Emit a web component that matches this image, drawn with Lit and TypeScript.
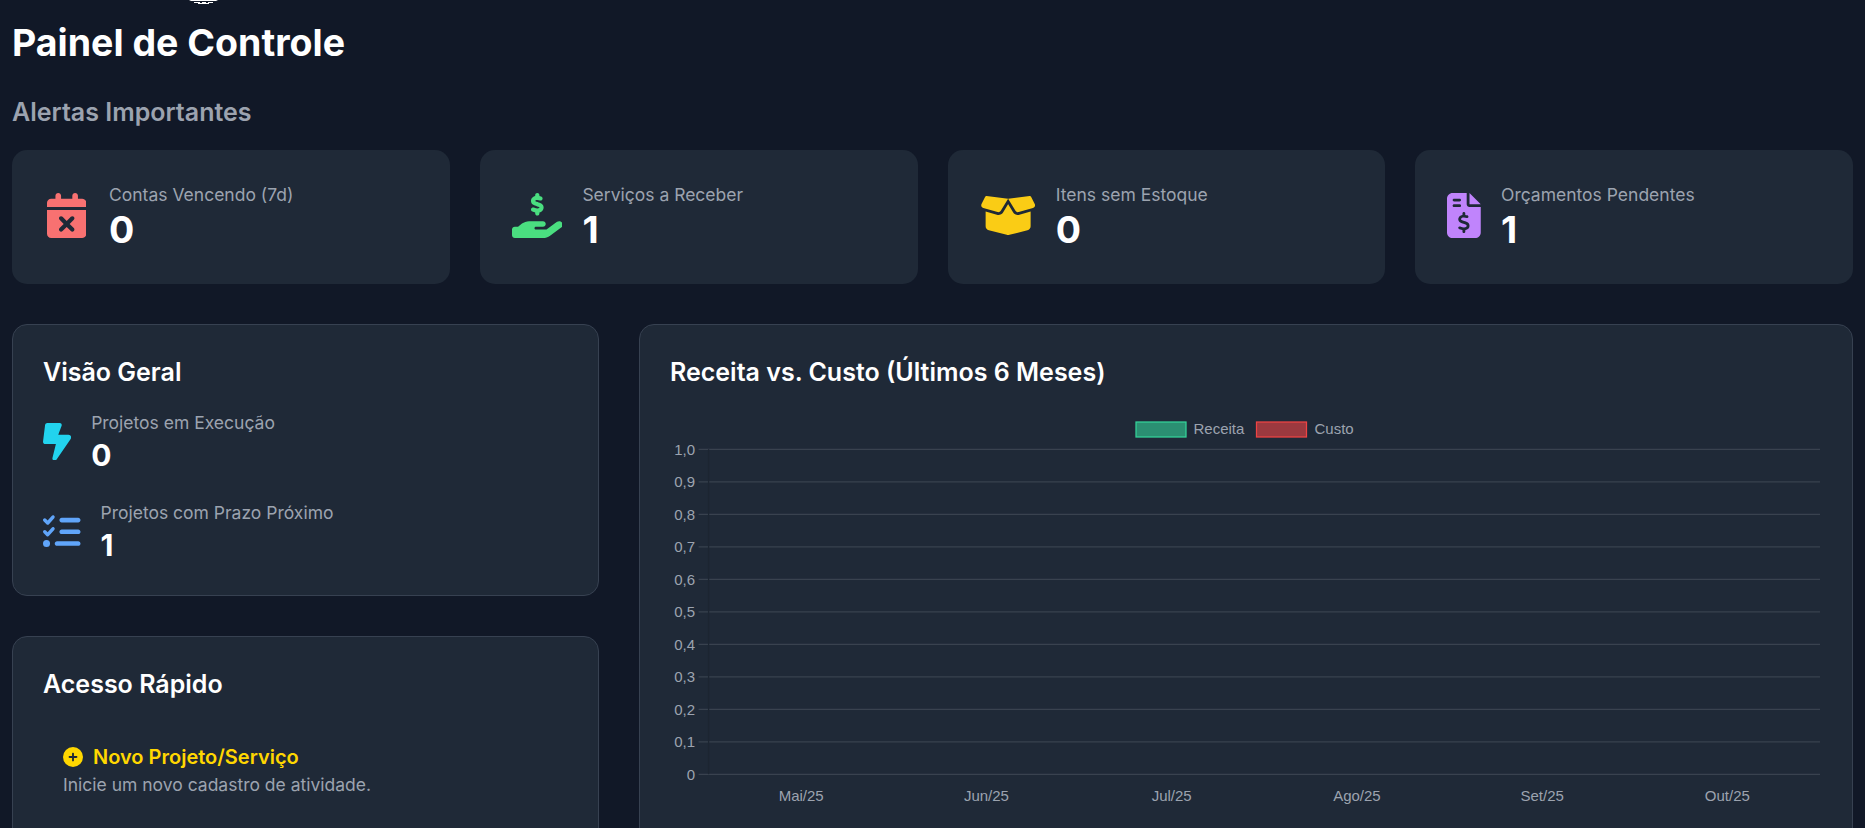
import { LitElement, css, html, svg } from "lit";
import { customElement } from "lit/decorators.js";

const ICONS: Record<string, { box: string; d: string }> = {
  calendar: {
    box: "0 0 448 512",
    d: "M128 0c17.7 0 32 14.3 32 32V64H288V32c0-17.7 14.3-32 32-32s32 14.3 32 32V64h48c26.5 0 48 21.5 48 48v48H0V112C0 85.5 21.5 64 48 64H96V32c0-17.7 14.3-32 32-32zM0 192H448V464c0 26.5-21.5 48-48 48H48c-26.5 0-48-21.5-48-48V192zM305 305c9.4-9.4 9.4-24.6 0-33.9s-24.6-9.4-33.9 0l-47 47-47-47c-9.4-9.4-24.6-9.4-33.9 0s-9.4 24.6 0 33.9l47 47-47 47c-9.4 9.4-9.4 24.6 0 33.9s24.6 9.4 33.9 0l47-47 47 47c9.4 9.4 24.6 9.4 33.9 0s9.4-24.6 0-33.9l-47-47 47-47z",
  },
  hand: {
    box: "0 0 576 512",
    d: "M312 24V34.5c6.4 1.2 12.6 2.7 18.2 4.2c12.8 3.4 20.4 16.6 17 29.4s-16.6 20.4-29.4 17c-10.9-2.9-21.1-4.9-30.2-5c-7.3-.1-14.7 1.7-19.4 4.4c-2.1 1.3-3.1 2.4-3.5 3c-.3 .5-.7 1.2-.7 2.8c0 .3 0 .5 0 .6c.2 .2 .9 1.2 3.3 2.6c5.8 3.5 14.4 6.2 27.4 10.1l.9 .3c11.1 3.3 25.9 7.8 37.9 15.3c13.7 8.6 26.1 22.9 26.4 44.9c.3 22.5-11.4 38.9-26.7 48.5c-6.7 4.1-13.9 7-21.3 8.8V232c0 13.3-10.7 24-24 24s-24-10.7-24-24V220.6c-9.5-2.3-18.2-5.3-25.6-7.8c-2.1-.7-4.1-1.4-6-2c-12.6-4.2-19.4-17.8-15.2-30.4s17.8-19.4 30.4-15.2c2.6 .9 5 1.7 7.3 2.5c13.6 4.6 23.4 7.9 33.9 8.3c8 .3 15.1-1.6 19.2-4.1c1.9-1.2 2.8-2.2 3.2-2.9c.4-.6 .9-1.8 .8-4.1l0-.2c0-1 0-2.1-4-4.6c-5.7-3.6-14.3-6.4-27.1-10.3l-1.9-.6c-10.8-3.2-25-7.5-36.4-14.4c-13.5-8.1-26.5-22-26.6-44.1c-.1-22.9 12.9-38.6 27.7-47.4c6.4-3.8 13.3-6.4 20.2-8.2V24c0-13.3 10.7-24 24-24s24 10.7 24 24zM568.2 336.3c13.1 17.8 9.3 42.8-8.5 55.9L433.1 485.5c-23.4 17.2-51.6 26.5-80.7 26.5H192 32c-17.7 0-32-14.3-32-32V416c0-17.7 14.3-32 32-32H68.8l44.9-36c22.7-18.2 50.9-28 80-28H272h16 64c17.7 0 32 14.3 32 32s-14.3 32-32 32H288 272c-8.8 0-16 7.2-16 16s7.2 16 16 16H392.6l119.7-88.2c17.8-13.1 42.8-9.3 55.9 8.5zM193.6 384l0 0-.9 0c.3 0 .6 0 .9 0z",
  },
  box: {
    box: "0 0 640 512",
    d: "M58.9 42.1c3-6.1 9.6-9.6 16.3-8.7L320 64 564.8 33.4c6.7-.8 13.3 2.7 16.3 8.7l41.7 83.4c9 17.9-.6 39.6-19.8 45.1L439.6 217.3c-13.9 4-28.8-1.9-36.2-14.3L320 64 236.6 203c-7.4 12.4-22.3 18.3-36.2 14.3L37.1 170.6c-19.3-5.5-28.8-27.2-19.8-45.1L58.9 42.1zM321.1 128l54.9 91.4c14.9 24.8 44.6 36.6 72.5 28.6L576 211.6v167c0 22-15 41.2-36.4 46.6l-204.1 51c-10.2 2.6-20.9 2.6-31 0l-204.1-51C79 419.7 64 400.5 64 378.5v-167L191.6 248c27.8 8 57.6-3.8 72.5-28.6L318.9 128h2.2z",
  },
  file: {
    box: "0 0 384 512",
    d: "M64 0C28.7 0 0 28.7 0 64V448c0 35.3 28.7 64 64 64H320c35.3 0 64-28.7 64-64V160H256c-17.7 0-32-14.3-32-32V0H64zM256 0V128H384L256 0zM64 80c0-8.8 7.2-16 16-16h64c8.8 0 16 7.2 16 16s-7.2 16-16 16H80c-8.8 0-16-7.2-16-16zm0 64c0-8.8 7.2-16 16-16h64c8.8 0 16 7.2 16 16s-7.2 16-16 16H80c-8.8 0-16-7.2-16-16zm128 72c8.8 0 16 7.2 16 16v17.3c8.5 1.2 16.7 3.1 24.1 5.1c8.5 2.3 13.6 11 11.3 19.6s-11 13.6-19.6 11.3c-11.1-3-22-5.2-32.1-5.3c-8.4-.1-17.4 1.8-23.6 5.5c-5.7 3.4-8.1 7.3-8.1 12.8c0 3.7 1.3 6.5 7.3 10.1c6.9 4.1 16.6 7.1 29.2 10.9l.5 .1 0 0 0 0c11.3 3.4 25.3 7.6 36.3 14.6c12.1 7.6 22.4 19.7 22.7 38.2c.3 19.3-9.6 33.3-22.9 41.6c-7.7 4.8-16.4 7.6-25.1 9.1V440c0 8.8-7.2 16-16 16s-16-7.2-16-16V422.2c-11.2-2.1-21.7-5.7-30.9-8.9l0 0c-2.1-.7-4.2-1.4-6.2-2.1c-8.4-2.8-12.9-11.9-10.1-20.2s11.9-12.9 20.2-10.1c2.5 .8 4.8 1.6 7.1 2.4l0 0 0 0 0 0c13.6 4.6 24.6 8.4 36.3 8.7c9.1 .3 17.9-1.7 23.7-5.3c5.1-3.2 7.9-7.3 7.8-14c-.1-4.6-1.8-7.8-7.7-11.6c-6.8-4.3-16.5-7.4-29-11.2l-1.6-.5 0 0c-11-3.3-24.3-7.3-34.8-13.7c-12-7.2-22.6-18.9-22.7-37.3c-.1-19.4 10.8-32.8 23.8-40.5c7.5-4.4 15.8-7.2 24.1-8.7V232c0-8.8 7.2-16 16-16z",
  },
  bolt: {
    box: "0 0 384 512",
    d: "M0 256L28.5 28c2-16 15.6-28 31.8-28H228.9c15 0 27.1 12.1 27.1 27.1c0 3.2-.6 6.4-1.7 9.4L208 160H347.3c20.2 0 36.7 16.4 36.7 36.7c0 7.4-2.2 14.6-6.4 20.7l-192.2 281c-5.9 8.6-15.6 13.7-25.9 13.7h-2.9c-15.7 0-28.5-12.8-28.5-28.5c0-2.3 .3-4.6 .9-6.9L176 288H32c-17.7 0-32-14.3-32-32z",
  },
  list: {
    box: "0 0 512 512",
    d: "M152.1 38.2c9.9 8.9 10.7 24 1.8 33.9l-72 80c-4.4 4.9-10.6 7.8-17.2 7.9s-12.9-2.4-17.6-7L7 113C-2.3 103.6-2.3 88.4 7 79s24.6-9.4 33.9 0l22.1 22.1 55.1-61.2c8.9-9.9 24-10.7 33.9-1.8zm0 160c9.9 8.9 10.7 24 1.8 33.9l-72 80c-4.4 4.9-10.6 7.8-17.2 7.9s-12.9-2.4-17.6-7L7 273c-9.4-9.4-9.4-24.6 0-33.9s24.6-9.4 33.9 0l22.1 22.1 55.1-61.2c8.9-9.9 24-10.7 33.9-1.8zM224 96c0-17.7 14.3-32 32-32H480c17.7 0 32 14.3 32 32s-14.3 32-32 32H256c-17.7 0-32-14.3-32-32zm0 160c0-17.7 14.3-32 32-32H480c17.7 0 32 14.3 32 32s-14.3 32-32 32H256c-17.7 0-32-14.3-32-32zM160 416c0-17.7 14.3-32 32-32H480c17.7 0 32 14.3 32 32s-14.3 32-32 32H192c-17.7 0-32-14.3-32-32zM48 368a48 48 0 1 1 0 96 48 48 0 1 1 0-96z",
  },
  plus: {
    box: "0 0 512 512",
    d: "M256 512A256 256 0 1 0 256 0a256 256 0 1 0 0 512zM232 344V280H168c-13.3 0-24-10.7-24-24s10.7-24 24-24h64V168c0-13.3 10.7-24 24-24s24 10.7 24 24v64h64c13.3 0 24 10.7 24 24s-10.7 24-24 24H280v64c0 13.3-10.7 24-24 24s-24-10.7-24-24z",
  },
};

const icon = (name: string, cls: string) => html`<svg
  class=${cls}
  viewBox=${ICONS[name].box}
  fill="currentColor"
  aria-hidden="true"
>
  <path d=${ICONS[name].d}></path>
</svg>`;

const ALERTS = [
  { icon: "calendar", cls: "red", label: "Contas Vencendo (7d)", value: 0, wrap: "fixed" },
  { icon: "hand", cls: "green", label: "Serviços a Receber", value: 1, wrap: "" },
  { icon: "box", cls: "yellow", label: "Itens sem Estoque", value: 0, wrap: "" },
  { icon: "file", cls: "purple", label: "Orçamentos Pendentes", value: 1, wrap: "" },
];

const OVERVIEW = [
  { icon: "bolt", cls: "cyan", label: "Projetos em Execução", value: 0 },
  { icon: "list", cls: "blue", label: "Projetos com Prazo Próximo", value: 1 },
];

const TICKS = ["1,0", "0,9", "0,8", "0,7", "0,6", "0,5", "0,4", "0,3", "0,2", "0,1", "0"];
const MONTHS = ["Mai/25", "Jun/25", "Jul/25", "Ago/25", "Set/25", "Out/25"];

// chart coordinates, relative to the chart svg
const PLOT_LEFT = 38.6;
const PLOT_RIGHT = 1150;
const PLOT_TOP = 39.3;
const PLOT_BOTTOM = 364.3;

@customElement("app-root")
export class AppRoot extends LitElement {
  static styles = css`
    :host {
      display: block;
      height: 828px;
      overflow: hidden;
      box-sizing: border-box;
      padding: 0 12px;
      background: #111827;
      color: #fff;
      font-family: Inter, "Noto Sans", sans-serif;
    }
    .logo {
      display: block;
      height: 20px;
      padding-left: 176px;
    }
    .logo svg {
      display: block;
      width: 31px;
      height: 4px;
    }
    h1 {
      margin: 0 0 30px;
      font-size: 37.5px;
      line-height: 45px;
      font-weight: 700;
    }
    h2 {
      margin: 0 0 20px;
      font-size: 25px;
      line-height: 35px;
      font-weight: 600;
      color: #9ca3af;
    }
    h3 {
      margin: 0 0 20px;
      font-size: 25px;
      line-height: 35px;
      font-weight: 600;
      color: #fff;
    }
    .alerts {
      display: grid;
      grid-template-columns: repeat(4, 1fr);
      gap: 30px;
      margin-bottom: 40px;
    }
    .alert {
      display: flex;
      align-items: center;
      gap: 20px;
      padding: 32px;
      background: #1f2937;
      border-radius: 15px;
    }
    .alert svg {
      height: 45px;
      flex: none;
      display: block;
      margin-bottom: 4px;
    }
    .fixed {
      width: 45px;
      display: flex;
      justify-content: center;
      flex: none;
    }
    .label {
      font-size: 17.5px;
      line-height: 25px;
      color: #9ca3af;
    }
    .value {
      font-size: 37.5px;
      line-height: 45px;
      font-weight: 700;
    }
    .main {
      display: grid;
      grid-template-columns: 587px 1fr;
      gap: 40px;
      align-items: stretch;
    }
    .side {
      display: flex;
      flex-direction: column;
      gap: 40px;
    }
    .panel {
      box-sizing: border-box;
      padding: 30px;
      background: #1f2937;
      border: 1px solid #374151;
      border-radius: 15px;
    }
    .rows {
      display: flex;
      flex-direction: column;
      gap: 25px;
    }
    .row {
      display: flex;
      align-items: center;
      gap: 20px;
    }
    .row svg {
      height: 37.5px;
      flex: none;
      display: block;
      margin-bottom: 2px;
    }
    .row .value {
      font-size: 30px;
      line-height: 40px;
    }
    .quick {
      min-height: 300px;
    }
    .link {
      padding: 20px;
    }
    .link-title {
      display: flex;
      align-items: center;
      gap: 10px;
      font-size: 20px;
      line-height: 30px;
      font-weight: 600;
      color: #ffd700;
    }
    .link-title svg {
      width: 20px;
      height: 20px;
      flex: none;
    }
    .link-text {
      font-size: 17.5px;
      line-height: 25px;
      color: #9ca3af;
    }
    .chart {
      display: block;
      width: 100%;
      height: 460px;
    }
    .chart text {
      font-family: "Liberation Sans", Arial, sans-serif;
      font-size: 15px;
      fill: #9ca3af;
    }
    .red { color: #f87171; }
    .green { color: #4ade80; }
    .yellow { color: #facc15; }
    .purple { color: #c084fc; }
    .cyan { color: #22d3ee; }
    .blue { color: #60a5fa; }
  `;

  private renderChart() {
    const step = (PLOT_BOTTOM - PLOT_TOP) / (TICKS.length - 1);
    const monthW = (PLOT_RIGHT - PLOT_LEFT) / MONTHS.length;
    return html`<svg class="chart">
      <rect x="466" y="12" width="50" height="15" fill="#2b8f72" stroke="#34d399" stroke-width="1.25"></rect>
      <text x="523.5" y="23.5">Receita</text>
      <rect x="586.5" y="12" width="50" height="15" fill="#9c393f" stroke="#ef4444" stroke-width="1.25"></rect>
      <text x="644.5" y="23.5">Custo</text>
      ${TICKS.map((t, i) => {
        const y = PLOT_TOP + i * step;
        return svg`
          <line x1="28.6" x2=${PLOT_RIGHT} y1=${y} y2=${y} stroke="#39424f" stroke-width="1.25"></line>
          <text x="25" y=${y + 5.4} text-anchor="end">${t}</text>
        `;
      })}
      <line x1=${PLOT_LEFT} x2=${PLOT_LEFT} y1=${PLOT_TOP} y2=${PLOT_BOTTOM} stroke="#1c2531" stroke-width="1.25"></line>
      ${MONTHS.map(
        (m, i) => svg`<text x=${PLOT_LEFT + (i + 0.5) * monthW} y="391" text-anchor="middle">${m}</text>`
      )}
    </svg>`;
  }

  render() {
    return html`
      <div class="logo">
        <svg viewBox="0 0 31 4" fill="#fff">
          <path d="M1 0h29l-2 1H3zM6 2h6v1H6zM14 2h4v1h-4zM20 2h5v1h-5zM10 3h11v1H10z"></path>
        </svg>
      </div>
      <h1>Painel de Controle</h1>
      <h2>Alertas Importantes</h2>
      <div class="alerts">
        ${ALERTS.map(
          (a) => html`<div class="alert">
            <div class=${a.wrap}>${icon(a.icon, a.cls)}</div>
            <div>
              <div class="label">${a.label}</div>
              <div class="value">${a.value}</div>
            </div>
          </div>`
        )}
      </div>
      <div class="main">
        <div class="side">
          <section class="panel">
            <h3>Visão Geral</h3>
            <div class="rows">
              ${OVERVIEW.map(
                (o) => html`<div class="row">
                  ${icon(o.icon, o.cls)}
                  <div>
                    <div class="label">${o.label}</div>
                    <div class="value">${o.value}</div>
                  </div>
                </div>`
              )}
            </div>
          </section>
          <section class="panel quick">
            <h3>Acesso Rápido</h3>
            <div class="link">
              <div class="link-title">${icon("plus", "")}<span>Novo Projeto/Serviço</span></div>
              <div class="link-text">Inicie um novo cadastro de atividade.</div>
            </div>
          </section>
        </div>
        <section class="panel">
          <h3>Receita vs. Custo (Últimos 6 Meses)</h3>
          ${this.renderChart()}
        </section>
      </div>
    `;
  }
}
